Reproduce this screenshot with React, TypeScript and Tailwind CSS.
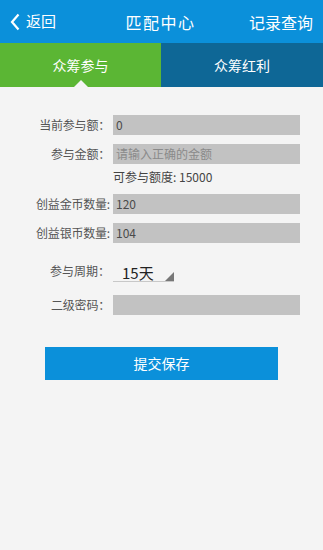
import React from 'react';

const font = { fontFamily: '"Noto Sans CJK SC", "Noto Sans", sans-serif' };

function Row({ label, value, placeholder }: { label: string; value?: string; placeholder?: string }) {
  return (
    <div className="flex items-center h-[20px]">
      <div className="w-[110px] text-right text-[12px] text-[#555] tracking-[-0.2px]">{label}</div>
      <div className="ml-[3px] w-[187px] h-[20px] bg-[#c2c2c2] flex items-center px-[3px] text-[12px]">
        {value ? <span className="text-[#4a4a4a]">{value}</span> : <span className="text-[#8a8a8a]">{placeholder}</span>}
      </div>
    </div>
  );
}

export default function App() {
  return (
    <div className="w-[323px] h-[550px] bg-[#f4f4f4] overflow-hidden" style={font}>
      {/* header */}
      <div className="h-[43px] bg-[#0b90da] flex items-center text-white">
        <div className="flex items-center pl-[10px] w-[90px]">
          <svg width="10" height="18" viewBox="0 0 10 18" className="mr-[6px]">
            <path d="M8.5 1.5 L2 9 L8.5 16.5" stroke="white" strokeWidth="2.2" fill="none" />
          </svg>
          <span className="text-[15px]">返回</span>
        </div>
        <div className="flex-1 text-center text-[16px] tracking-[1.5px] pr-[2px]">匹配中心</div>
        <div className="w-[90px] text-right pr-[10px] text-[16px]">记录查询</div>
      </div>
      {/* tabs */}
      <div className="flex h-[44px]">
        <div className="w-[161px] bg-[#5bb634] flex items-center justify-center text-white text-[14px] relative">
          众筹参与
          <div className="absolute bottom-0 left-[74px] w-0 h-0 border-l-[7px] border-r-[7px] border-b-[7px] border-l-transparent border-r-transparent border-b-[#f4f4f4]" />
        </div>
        <div className="flex-1 bg-[#0e6796] flex items-center justify-center text-white text-[14px]">众筹红利</div>
      </div>
      {/* form */}
      <div className="pt-[28px]">
        <Row label="当前参与额：" value="0" />
        <div className="mt-[9px]">
          <Row label="参与金额：" placeholder="请输入正确的金额" />
        </div>
        <div className="pl-[113px] mt-[5px] text-[12px] text-[#444] h-[16px] leading-[16px]">可参与额度: 15000</div>
        <div className="mt-[9px]">
          <Row label="创益金币数量:" value="120" />
        </div>
        <div className="mt-[9px]">
          <Row label="创益银币数量:" value="104" />
        </div>
        <div className="flex items-center mt-[17px] h-[22px]">
          <div className="w-[110px] text-right text-[12px] text-[#555]">参与周期：</div>
          <div className="ml-[3px] w-[61px] h-[22px] border-b border-[#c8c8c8] relative">
            <span className="pl-[9px] text-[15px] text-[#222] leading-[18px]">15天</span>
            <div className="absolute right-0 bottom-0 w-0 h-0 border-l-[9px] border-l-transparent border-b-[9px] border-b-[#777]" />
          </div>
        </div>
        <div className="mt-[13px]">
          <Row label="二级密码：" />
        </div>
        <div className="mt-[32px] ml-[45px] w-[233px] h-[33px] bg-[#0b90da] flex items-center justify-center text-white text-[14px]">
          提交保存
        </div>
      </div>
    </div>
  );
}
